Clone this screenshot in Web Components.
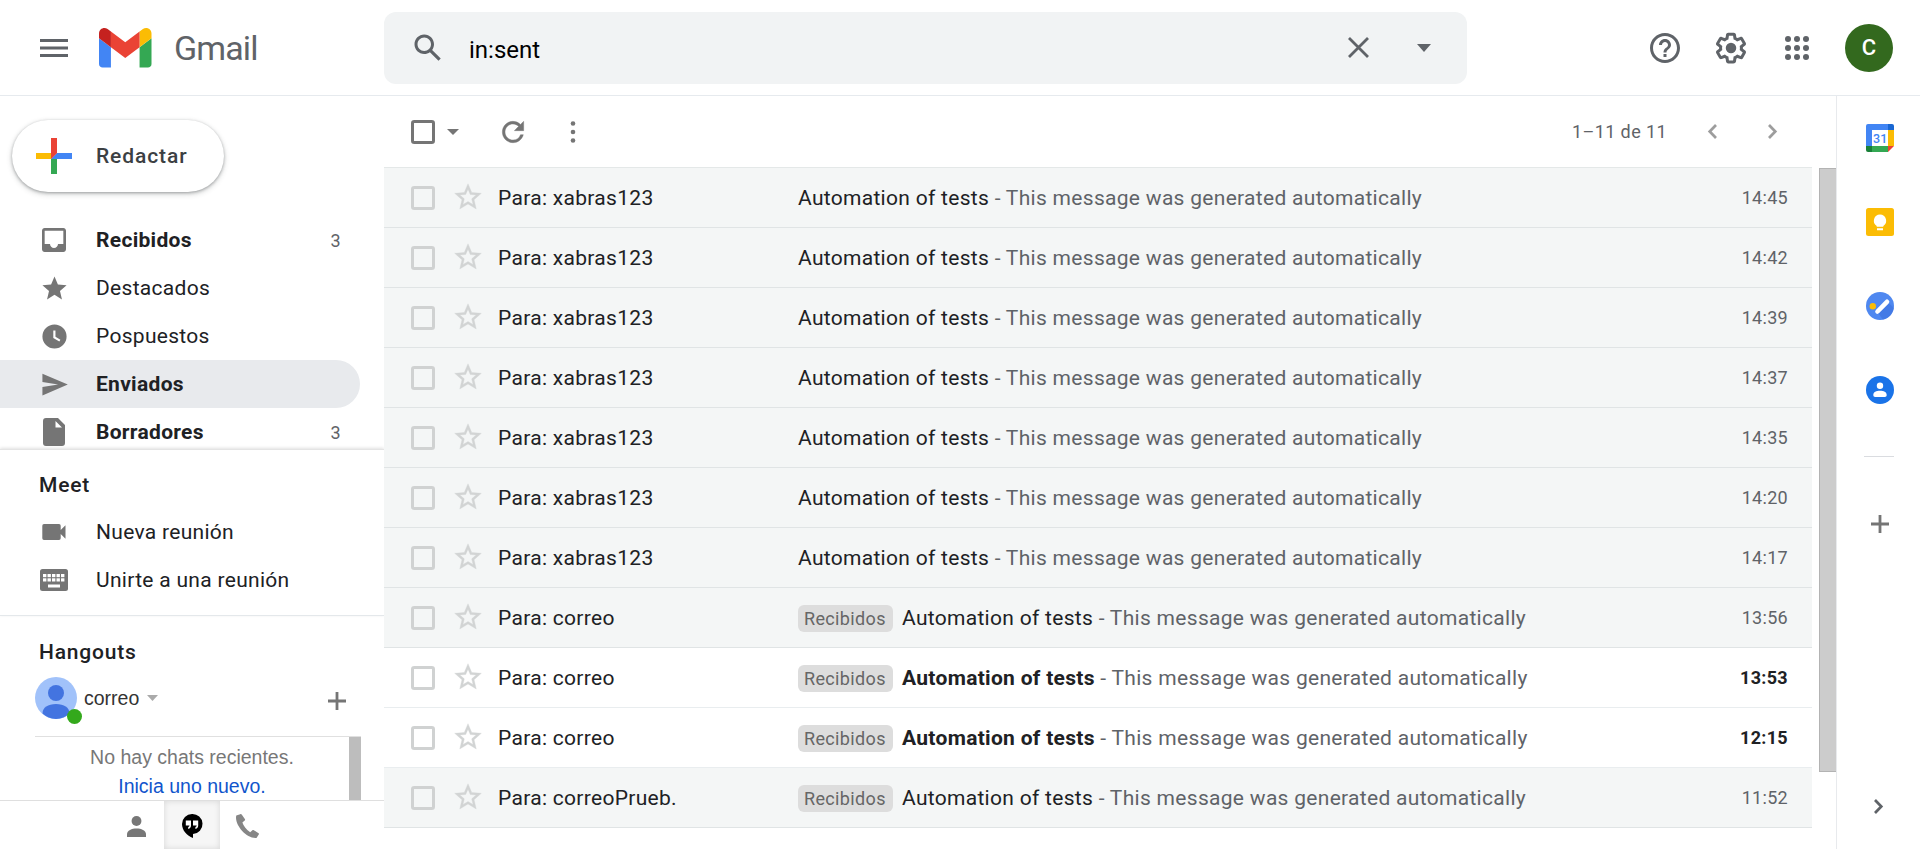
<!DOCTYPE html>
<html lang="es">
<head>
<meta charset="utf-8">
<title>Gmail</title>
<style>
html,body{margin:0;height:100%;overflow:hidden;background:#fff}
body{font-family:Roboto,"Liberation Sans",sans-serif;font-size:21px;color:#202124}
</style>
</head>
<body>
<mail-app></mail-app>
<script>
const ICONS = {
  menu: ['0 0 28 18', '<path d="M0 0h28v3H0zM0 7.4h28v3.2H0zM0 15h28v3H0z"/>'],
  logo: ['52 42 88 66', '<path fill="#4285f4" d="M58 108h14V74L52 59v43c0 3.32 2.69 6 6 6"/><path fill="#34a853" d="M120 108h14c3.32 0 6-2.69 6-6V59l-20 15"/><path fill="#fbbc04" d="M120 48v26l20-15v-8c0-7.42-8.47-11.65-14.4-7.2"/><path fill="#ea4335" d="M72 74V48l24 18 24-18v26L96 92"/><path fill="#c5221f" d="M52 51v8l20 15V48l-5.6-4.2c-5.94-4.45-14.4-.22-14.4 7.2"/>'],
  search: ['0 0 24 24', '<path d="M20.49 19l-5.73-5.73C15.53 12.2 16 10.91 16 9.5 16 5.91 13.09 3 9.5 3S3 5.91 3 9.5 5.91 16 9.5 16c1.41 0 2.7-.47 3.77-1.24L19 20.49 20.49 19zM5 9.5C5 7.01 7.01 5 9.5 5S14 7.01 14 9.5 11.99 14 9.5 14 5 11.99 5 9.5z"/>'],
  close: ['0 0 21 21', '<path d="M1 1L20 20M20 1L1 20" stroke="currentColor" stroke-width="2.8" fill="none"/>'],
  caret: ['0 0 10 5', '<path d="M0 0h10L5 5z"/>'],
  help: ['0 0 24 24', '<path d="M11 18h2v-2h-2v2zm1-16C6.48 2 2 6.48 2 12s4.48 10 10 10 10-4.48 10-10S17.52 2 12 2zm0 18c-4.41 0-8-3.59-8-8s3.59-8 8-8 8 3.59 8 8-3.59 8-8 8zm0-14c-2.21 0-4 1.79-4 4h2c0-1.1.9-2 2-2s2 .9 2 2c0 2-3 1.75-3 5h2c0-2.25 3-2.5 3-5 0-2.21-1.79-4-4-4z"/>'],
  gear: ['0 0 24 24', '<path d="M13.85 22.25h-3.7c-.74 0-1.36-.54-1.45-1.27l-.27-1.89c-.27-.14-.53-.29-.79-.46l-1.8.72c-.7.26-1.47-.03-1.81-.65L2.2 15.53c-.35-.66-.2-1.44.36-1.88l1.53-1.19c-.01-.15-.02-.3-.02-.46 0-.15.01-.31.02-.46l-1.52-1.19c-.59-.45-.74-1.26-.37-1.88l1.85-3.19c.34-.62 1.11-.9 1.79-.63l1.81.73c.26-.17.52-.32.78-.46l.27-1.91c.09-.7.71-1.25 1.44-1.25h3.7c.74 0 1.36.54 1.45 1.27l.27 1.89c.27.14.53.29.79.46l1.8-.72c.71-.26 1.48.03 1.82.65l1.84 3.18c.36.66.2 1.44-.36 1.88l-1.52 1.19c.01.15.02.3.02.46s-.01.31-.02.46l1.52 1.19c.56.45.72 1.23.37 1.86l-1.86 3.22c-.34.62-1.11.9-1.8.63l-1.8-.72c-.26.17-.52.32-.78.46l-.27 1.91c-.1.68-.72 1.22-1.46 1.22zm-3.23-2h2.76l.37-2.55.53-.22c.44-.18.88-.44 1.34-.78l.45-.34 2.38.96 1.38-2.4-2.03-1.58.07-.56c.03-.26.06-.51.06-.78s-.03-.53-.06-.78l-.07-.56 2.03-1.58-1.39-2.4-2.39.96-.45-.35c-.42-.32-.87-.58-1.33-.77l-.52-.22-.37-2.55h-2.76l-.37 2.55-.53.21c-.44.19-.88.44-1.34.79l-.45.33-2.38-.95-1.39 2.39 2.03 1.58-.07.56a7 7 0 0 0-.06.79c0 .26.02.53.06.78l.07.56-2.03 1.58 1.38 2.4 2.39-.96.45.35c.43.33.86.58 1.33.77l.53.22.38 2.55z"/><circle cx="12" cy="12" r="3.5"/>'],
  apps: ['0 0 24 24', [3,12,21].map(y => [3,12,21].map(x => `<circle cx="${x}" cy="${y}" r="3"/>`).join('')).join('')],
  compose: ['0 0 36 36', '<path fill="#ea4335" d="M15 0h6v15l-6 6z"/><path fill="#fbbc04" d="M0 15h15v6H0z"/><path fill="#34a853" d="M15 21h6v15h-6z"/><path fill="#4285f4" d="M21 15h15v6H15z"/><path fill="#ea4335" d="M15 15h6l-6 6z"/>'],
  inbox: ['0 0 24 24', '<path d="M19 3H5c-1.1 0-2 .9-2 2v14c0 1.1.9 2 2 2h14c1.1 0 2-.9 2-2V5c0-1.1-.9-2-2-2zm0 12h-4c0 1.66-1.35 3-3 3s-3-1.34-3-3H5V5h14v10z"/>'],
  star: ['0 0 24 24', '<path d="M12 17.27L18.18 21l-1.64-7.03L22 9.24l-7.19-.61L12 2 9.19 8.63 2 9.24l5.46 4.73L5.82 21z"/>'],
  clock: ['0 0 24 24', '<path fill-rule="evenodd" d="M12 2a10 10 0 1 0 0 20 10 10 0 0 0 0-20zM11 7h1.8v5.3l4.1 2.3-.9 1.5-5-2.9z"/>'],
  send: ['0 0 24 24', '<path d="M2 21L23 12 2 3v7l13 2-13 2z"/>'],
  draft: ['0 0 22 28', '<path fill-rule="evenodd" d="M3 0h12l7 7v18a3 3 0 0 1-3 3H3a3 3 0 0 1-3-3V3a3 3 0 0 1 3-3zm9.5 3v6.5H19z"/>'],
  video: ['0 0 24 16', '<path d="M2 0h15a1.700 1.700 0 0 1 1.700 1.700V6L23.500 1.300v13.400L18.700 10v4.300A1.700 1.700 0 0 1 17 16H2a1.700 1.700 0 0 1-1.700-1.700V1.700A1.700 1.700 0 0 1 2 0z"/>'],
  keyboard: ['0 0 28 22', '<rect width="28" height="22" rx="2.500"/><g fill="#fff">' + [5,9.3].map(y => [3,7.5,12,16.5,21].map(x => `<rect x="${x}" y="${y}" width="3.400" height="3.200"/>`).join('')).join('') + '<rect x="8" y="15.500" width="12" height="3"/></g>'],
  plus: ['0 0 18 18', '<path d="M7.600 0h2.800v7.600H18v2.800h-7.600V18H7.600v-7.600H0V7.600h7.600z"/>'],
  avatar: ['0 0 42 42', '<circle cx="21" cy="21" r="21" fill="#a1c2fa"/><circle cx="21" cy="16" r="8" fill="#4374e0"/><path fill="#4374e0" d="M7.500 36.500c0-6 5.500-9.500 13.500-9.500s13.500 3.500 13.500 9.500A21 21 0 0 1 21 42 21 21 0 0 1 7.500 36.500z"/>'],
  person: ['0 0 20 22', '<circle cx="10" cy="5.200" r="5.200"/><path d="M0 22v-3c0-4 5-6 10-6s10 2 10 6v3z"/>'],
  hangouts: ['0 0 20 24', '<path fill="#000" d="M10 0a10 10 0 1 1 1 20v4C5 21.500 0 16.500 0 10A10 10 0 0 1 10 0z"/><path fill="#fff" d="M3.800 6.500h5.200v5c0 1.900-1 3-2.800 3.500v-2c.8-.3 1.200-.7 1.300-1.500H3.800zM11 6.500h5.200v5c0 1.900-1 3-2.800 3.500v-2c.8-.3 1.200-.7 1.300-1.500H11z"/>'],
  phone: ['0 0 24 24', '<path d="M5.200.2L1.300 1.600C-1 10 11 25 21.500 24l2.400-3.700c.2-.5 0-.9-.3-1.100l-4.800-3c-.5-.3-1-.2-1.400.1l-2.200 2C11 15.500 8.500 12 7.400 8.600l2.300-2c.4-.3.500-.8.300-1.300L6.700.6C6.400.2 5.800 0 5.200.2z"/>'],
  refresh: ['0 0 24 24', '<path d="M17.650 6.350A7.950 7.950 0 0 0 12 4c-4.420 0-7.990 3.580-7.990 8s3.570 8 7.990 8c3.730 0 6.840-2.550 7.730-6h-2.080A5.990 5.990 0 0 1 12 18c-3.310 0-6-2.690-6-6s2.690-6 6-6c1.660 0 3.140.69 4.220 1.780L13 11h7V4l-2.350 2.350z" stroke="currentColor" stroke-width=".3"/>'],
  more: ['0 0 6 22', '<circle cx="3" cy="2.500" r="2.300"/><circle cx="3" cy="11" r="2.300"/><circle cx="3" cy="19.500" r="2.300"/>'],
  check: ['0 0 24 24', '<rect x="1.500" y="1.500" width="21" height="21" rx="1.800" fill="none" stroke="currentColor" stroke-width="3"/>'],
  starline: ['0 0 24 24', '<path stroke="currentColor" stroke-width=".25" d="M22 9.240l-7.190-.62L12 2 9.190 8.630 2 9.240l5.460 4.730L5.820 21 12 17.270 18.180 21l-1.630-7.030L22 9.240zM12 15.400l-3.760 2.270 1-4.280-3.320-2.880 4.380-.38L12 6.100l1.710 4.040 4.380.38-3.320 2.880 1 4.280L12 15.400z"/>'],
  left: ['0 0 9 15', '<path d="M8 1L1.700 7.500 8 14" fill="none" stroke="currentColor" stroke-width="2.700"/>'],
  right: ['0 0 9 15', '<path d="M1 1l6.300 6.500L1 14" fill="none" stroke="currentColor" stroke-width="2.700"/>'],
  calendar: ['0 0 28 28', '<path fill="#4285f4" d="M2 0h20v6H6v16H0V2a2 2 0 0 1 2-2z"/><path fill="#1967d2" d="M22 0h4a2 2 0 0 1 2 2v4h-6z"/><path fill="#fbbc04" d="M22 6h6v16h-6z"/><path fill="#34a853" d="M6 22h16v6H6z"/><path fill="#188038" d="M0 22h6v6H2a2 2 0 0 1-2-2z"/><path fill="#ea4335" d="M22 22h6l-6 6z"/><path fill="#fff" d="M6 6h16v16H6z"/><text x="14.200" y="18.800" text-anchor="middle" font-family="Roboto,sans-serif" font-size="12.500" font-weight="500" fill="#4285f4">31</text>'],
  keep: ['0 0 28 28', '<rect width="28" height="28" rx="2.500" fill="#fbbc04"/><path fill="#fff" d="M14 6.500a6.200 6.200 0 0 1 3.300 11.400v.8h-6.600v-.8A6.200 6.200 0 0 1 14 6.500zM11 20.200h6v2h-6z"/>'],
  tasks: ['0 0 28 28', '<circle cx="14" cy="14" r="14" fill="#4f88f0"/><path d="M11.500 20l9.500-10.500 7 6.500A14 14 0 0 1 17 27.700z" fill="#3367d6" opacity=".4"/><circle cx="6.800" cy="14.200" r="3.200" fill="#fbbc04"/><path d="M11.500 19.500L21 9.800" stroke="#fff" stroke-width="4.600" stroke-linecap="round"/>'],
  contacts: ['0 0 28 28', '<circle cx="14" cy="14" r="14" fill="#1a73e8"/><circle cx="14" cy="9.700" r="3.200" fill="#fff"/><path fill="#fff" d="M7.300 19c0-3 3-4.300 6.700-4.300s6.700 1.300 6.700 4.300c0 1.200-.7 2-1.900 2H9.200c-1.200 0-1.900-.8-1.900-2z"/>']
};

function define(name, css, html) {
  customElements.define(name, class extends HTMLElement {
    connectedCallback() {
      if (this.shadowRoot) return;
      const body = typeof html === 'function' ? html(this) : html;
      this.attachShadow({mode: 'open'}).innerHTML = `<style>*{box-sizing:border-box}${css}</style>${body}`;
    }
  });
}

define('g-icon', ':host{display:block;flex:none}svg{display:block;fill:currentColor;overflow:visible}', el => {
  const [vb, body] = ICONS[el.getAttribute('name')];
  const w = el.getAttribute('w'), h = el.getAttribute('h') || w;
  return `<svg width="${w}" height="${h}" viewBox="${vb}" preserveAspectRatio="none" aria-hidden="true">${body}</svg>`;
});

define('mail-app', `
  :host{display:grid;grid-template-rows:96px 753px;width:1920px;height:849px;overflow:hidden;background:#fff}
  .body{display:grid;grid-template-columns:384px 1452px 84px;min-height:0}`,
  `<app-header></app-header><div class="body"><side-nav></side-nav><mail-pane></mail-pane><addon-rail></addon-rail></div>`);

define('app-header', `
  :host{display:flex;align-items:center;border-bottom:1px solid #e6eaee;color:#5f6368;box-sizing:border-box}
  .brand{display:flex;align-items:center;width:384px;padding-left:40px}
  .brand g-icon+g-icon{margin-left:31px}
  .name{margin-left:22.5px;font:400 34px/40px Roboto,sans-serif;letter-spacing:-.9px}
  .tools{display:flex;align-items:center;margin-left:180px;gap:30px}
  .apps{padding:0 6px}
  .me{width:48px;height:48px;border-radius:50%;background:#33691e;color:#fff;font-weight:500;font-size:22px;display:flex;align-items:center;justify-content:center}`,
  `<div class="brand"><g-icon name="menu" w="28" h="18"></g-icon><g-icon name="logo" w="52.5" h="39.5"></g-icon><span class="name">Gmail</span></div>
   <search-box></search-box>
   <div class="tools"><g-icon name="help" w="36"></g-icon><g-icon name="gear" w="36"></g-icon><g-icon class="apps" name="apps" w="24"></g-icon><div class="me">C</div></div>`);

define('search-box', `
  :host{display:flex;align-items:center;width:1083px;height:72px;border-radius:12px;background:#f1f3f4;box-sizing:border-box;padding:0 36px 0 26px}
  .q{flex:1;margin:4px 0 0 23px;font-size:24px;color:#000}
  g-icon+g-icon{margin-left:48px}`,
  `<g-icon name="search" w="36"></g-icon><span class="q">in:sent</span><g-icon name="close" w="21"></g-icon><g-icon name="caret" w="14" h="8"></g-icon>`);

define('side-nav', `
  :host{display:flex;flex-direction:column;min-height:0;background:#fff}
  .compose{display:flex;align-items:center;flex:none;width:212px;height:72px;margin:24px 0 0 12px;padding-left:24px;border-radius:36px;box-shadow:0 1px 3px rgba(60,64,67,.4),0 2px 5px 1px rgba(60,64,67,.17);color:#3c4043;font-weight:500;font-size:21px;letter-spacing:.9px}
  .compose span{margin-left:24px}
  .folders{height:257px;padding-top:24px;overflow:hidden;flex:none}
  .meet,.hang{flex:none;color:#202124}
  .meet{height:167px;border-top:1px solid #e4e4e4;box-shadow:0 -1px 3px rgba(0,0,0,.12);padding-top:11px;border-bottom:1px solid #e4e8eb}
  h2{margin:0;padding-left:39px;height:47px;line-height:48px;font-size:21px;font-weight:500;letter-spacing:.8px}
  .hang{height:61px;padding-top:12px}`,
  `<div class="compose"><g-icon name="compose" w="36"></g-icon><span>Redactar</span></div>
   <div class="folders">
    <nav-item icon="inbox" iw="32" count="3" bold>Recibidos</nav-item>
    <nav-item icon="star" iw="29">Destacados</nav-item>
    <nav-item icon="clock" iw="29">Pospuestos</nav-item>
    <nav-item icon="send" iw="29" bold active>Enviados</nav-item>
    <nav-item icon="draft" iw="22" ih="28" count="3" bold>Borradores</nav-item>
   </div>
   <div class="meet"><h2>Meet</h2>
    <nav-item icon="video" iw="24" ih="16">Nueva reunión</nav-item>
    <nav-item icon="keyboard" iw="28" ih="22">Unirte a una reunión</nav-item>
   </div>
   <div class="hang"><h2>Hangouts</h2></div>
   <hangouts-panel></hangouts-panel>`);

define('nav-item', `
  :host{display:flex;align-items:center;height:48px;width:360px;box-sizing:border-box;padding-right:19px;letter-spacing:.3px;border-radius:0 24px 24px 0}
  :host([active]){background:#e8eaed}
  :host([bold]){font-weight:700}
  .i{width:108px;margin-right:-12px;display:flex;justify-content:center;color:#757575}
  .t{flex:1}
  .n{font-size:18px;font-weight:400;color:#5f6368}`,
  el => `<span class="i"><g-icon name="${el.getAttribute('icon')}" w="${el.getAttribute('iw')}" h="${el.getAttribute('ih') || el.getAttribute('iw')}"></g-icon></span><span class="t"><slot></slot></span><span class="n">${el.getAttribute('count') || ''}</span>`);

define('hangouts-panel', `
  :host{display:flex;flex-direction:column;flex:1;min-height:0;font-family:"Liberation Sans",Arial,sans-serif;font-size:19.5px}
  .user{display:flex;align-items:center;height:42px;margin:0 38px 17px 35px;color:#333;flex:none}
  .pic{position:relative;margin-right:7px}
  .pic i{position:absolute;left:32px;top:32px;width:15px;height:15px;border-radius:50%;background:#34a91c}
  .user .c{margin-left:8px;color:#aaa}
  .user .p{margin-left:auto;color:#757575;margin-top:6px}
  .list{display:flex;margin:0 23px 0 35px;height:64px;border-top:1px solid #e0e0e0;color:#777;flex:none;text-align:center;line-height:29px}
  .list div{flex:1;padding-top:6px}
  .list a{color:#15c;display:block}
  .bar{width:12px;background:#bdbdbd}
  .tabs{flex:1;display:flex;border-top:1px solid #dfdfdf;padding-left:108px;color:#777}
  .tabs span{width:56px;display:flex;justify-content:center;padding-top:13px}
  .tabs .on{background:#f6f6f6;box-shadow:inset 0 0 6px rgba(0,0,0,.13)}
  .tabs .ph{width:54px;color:#868686}`,
  `<div class="user"><div class="pic"><g-icon name="avatar" w="42"></g-icon><i></i></div><span>correo</span><g-icon class="c" name="caret" w="11" h="6"></g-icon><g-icon class="p" name="plus" w="18"></g-icon></div>
   <div class="list"><div>No hay chats recientes.<a>Inicia uno nuevo.</a></div><span class="bar"></span></div>
   <div class="tabs"><span style="padding-top:15px"><g-icon name="person" w="19" h="21"></g-icon></span><span class="on"><g-icon name="hangouts" w="20" h="24"></g-icon></span><span class="ph"><g-icon name="phone" w="24"></g-icon></span></div>`);

define('mail-pane', `
  :host{display:flex;flex-direction:column;min-height:0}
  .list{flex:1;display:flex;align-items:flex-start}
  .rows{width:1428px;border-top:1px solid #e4e8e8}
  .bar{width:17px;height:604px;margin:1px 0 0 7px;background:#ccc;border:1px solid #b3b3b3;border-right:0}`,
  () => {
    const row = (time, to, tag, unread) => `<mail-row time="${time}" to="${to}" ${tag ? 'tag="Recibidos"' : ''} ${unread ? 'unread' : ''}></mail-row>`;
    return `<mail-toolbar></mail-toolbar><div class="list"><div class="rows">` +
      ['14:45','14:42','14:39','14:37','14:35','14:20','14:17'].map(t => row(t, 'xabras123')).join('') +
      row('13:56', 'correo', 1) + row('13:53', 'correo', 1, 1) + row('12:15', 'correo', 1, 1) + row('11:52', 'correoPrueb.', 1) +
      `</div><span class="bar"></span></div>`;
  });

define('mail-toolbar', `
  :host{display:flex;align-items:center;flex:none;height:70px;padding:1px 59px 0 27px;box-sizing:border-box;margin-bottom:1px;color:#757575}
  .a{margin-left:12px}.b{margin-left:38px}.c{margin-left:41px}
  .n{margin-left:auto;font-size:18px;letter-spacing:.4px;color:#5f6368;margin-right:41px}
  .l{margin-right:51px;opacity:.7}.r{opacity:.7}`,
  `<g-icon name="check" w="24"></g-icon><g-icon class="a" name="caret" w="12" h="6"></g-icon><g-icon class="b" name="refresh" w="32"></g-icon><g-icon class="c" name="more" w="6" h="22"></g-icon>
   <span class="n">1–11 de 11</span><g-icon class="l" name="left" w="9" h="15"></g-icon><g-icon class="r" name="right" w="9" h="15"></g-icon>`);

define('mail-row', `
  :host{display:flex;align-items:center;height:60px;padding:0 24px 0 27px;background:#f4f6f6;border-bottom:1px solid #e0e4e5;box-sizing:border-box;letter-spacing:.3px;white-space:nowrap}
  :host([unread]){background:#fff;border-color:#e9edef}
  .k{color:#d0d2d2}
  .s{margin:-2px 14px 0 17px;color:#d2d4d4}
  .to{width:300px}
  .tag{height:27px;line-height:28px;padding:0 6px;border-radius:6px;background:#ddd;color:#666;font-size:18px;letter-spacing:.35px;margin:2px 9px 0 0;width:95px}
  .subj{flex:1;color:#5f6368}
  b{font-weight:400;color:#202124}
  :host([unread]) b{font-weight:700}
  .t{font-size:18px;color:#5f6368}
  :host([unread]) .t{font-weight:700;color:#202124}`,
  el => `<g-icon class="k" name="check" w="24"></g-icon><g-icon class="s" name="starline" w="32"></g-icon><span class="to">Para: ${el.getAttribute('to')}</span>${el.hasAttribute('tag') ? `<span class="tag">${el.getAttribute('tag')}</span>` : ''}<span class="subj"><b>Automation of tests</b> - This message was generated automatically</span><span class="t">${el.getAttribute('time')}</span>`);

define('addon-rail', `
  :host{display:flex;flex-direction:column;align-items:center;border-left:1px solid #e8eaed;box-sizing:border-box;padding:28px 0 0 3px;gap:56px;color:#757575}
  hr{width:30px;height:1px;border:0;background:#dadce0;margin:-4px 3px 0 0}
  .p{margin-top:2px}
  .r{margin:210px 3px 0 0;color:#5f6368}`,
  `<g-icon name="calendar" w="28"></g-icon><g-icon name="keep" w="28"></g-icon><g-icon name="tasks" w="28"></g-icon><g-icon name="contacts" w="28"></g-icon><hr><g-icon class="p" name="plus" w="18"></g-icon><g-icon class="r" name="right" w="9" h="15"></g-icon>`);
</script>
</body>
</html>
